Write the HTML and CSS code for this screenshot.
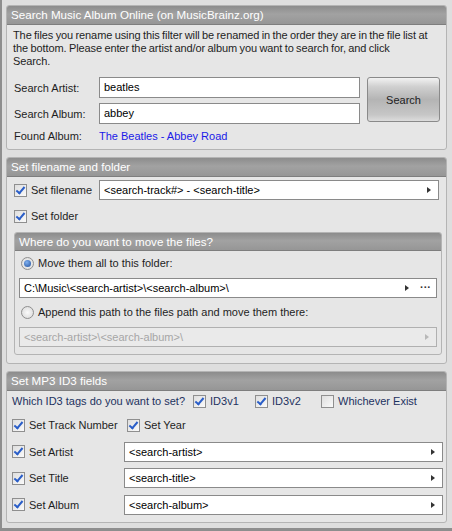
FILE: index.html
```html
<!DOCTYPE html>
<html lang="en">
<head>
  <meta charset="UTF-8" />
  <title>Rename Filter</title>
  <link rel="stylesheet" href="styles.css">
</head>
<body>
  <div class="window">

    <section class="panel">
      <div class="panel-head">Search Music Album Online (on MusicBrainz.org)</div>
      <div class="panel-body search-body">
        <p class="intro">The files you rename using this filter will be renamed in the order they are in the file list at<br>the bottom. Please enter the artist and/or album you want to search for, and click<br>Search.</p>
        <div class="search-grid">
          <div class="search-fields">
            <div class="row">
              <span class="label">Search Artist:</span>
              <div class="field">beatles</div>
            </div>
            <div class="row">
              <span class="label">Search Album:</span>
              <div class="field">abbey</div>
            </div>
          </div>
          <button class="search-btn">Search</button>
        </div>
        <div class="row found">
          <span class="label">Found Album:</span>
          <span class="link">The Beatles - Abbey Road</span>
        </div>
      </div>
    </section>

    <section class="panel">
      <div class="panel-head">Set filename and folder</div>
      <div class="panel-body folder-body">
        <div class="row">
          <label class="check wide"><span class="box checked"></span>Set filename</label>
          <div class="field arrow">&lt;search-track#&gt; - &lt;search-title&gt;</div>
        </div>
        <div class="row">
          <label class="check"><span class="box checked"></span>Set folder</label>
        </div>

        <section class="panel inner">
          <div class="panel-head">Where do you want to move the files?</div>
          <div class="panel-body move-body">
            <label class="radio"><span class="dot checked"></span>Move them all to this folder:</label>
            <div class="field arrow dots">C:\Music\&lt;search-artist&gt;\&lt;search-album&gt;\</div>
            <label class="radio"><span class="dot"></span>Append this path to the files path and move them there:</label>
            <div class="field arrow disabled">&lt;search-artist&gt;\&lt;search-album&gt;\</div>
          </div>
        </section>
      </div>
    </section>

    <section class="panel">
      <div class="panel-head">Set MP3 ID3 fields</div>
      <div class="panel-body id3-body">
        <div class="row tags">
          <span class="question">Which ID3 tags do you want to set?</span>
          <label class="check tag1"><span class="box checked"></span>ID3v1</label>
          <label class="check tag2"><span class="box checked"></span>ID3v2</label>
          <label class="check"><span class="box"></span>Whichever Exist</label>
        </div>
        <div class="row track-row">
          <label class="check track"><span class="box checked"></span>Set Track Number</label>
          <label class="check"><span class="box checked"></span>Set Year</label>
        </div>
        <div class="row">
          <label class="check id3-label"><span class="box checked"></span>Set Artist</label>
          <div class="field arrow">&lt;search-artist&gt;</div>
        </div>
        <div class="row">
          <label class="check id3-label"><span class="box checked"></span>Set Title</label>
          <div class="field arrow">&lt;search-title&gt;</div>
        </div>
        <div class="row">
          <label class="check id3-label"><span class="box checked"></span>Set Album</label>
          <div class="field arrow">&lt;search-album&gt;</div>
        </div>
      </div>
    </section>

  </div>
</body>
</html>
```

FILE: styles.css
```css
body {
  margin: 0;
  padding: 0;
  font-family: "Liberation Sans", Arial, sans-serif;
  font-size: 11px;
  color: #1e1e1e;
  background: #dedede;
}

.window {
  width: 452px;
  height: 531px;
  box-sizing: border-box;
  padding: 5px 5px 0 4px;
  border-left: 2px solid #8e8e8e;
  border-bottom: 3px solid #8e8e8e;
  display: flex;
  flex-direction: column;
  gap: 7px;
}

.panel {
  border: 1px solid #b4b4b4;
  border-radius: 3px;
  background: #e6e6e6;
  overflow: hidden;
}

.panel-head {
  height: 18px;
  line-height: 18px;
  padding-left: 4px;
  color: #fff;
  font-size: 11.6px;
  background: linear-gradient(#8c8c8c, #a2a2a2 45%, #969696);
  border-bottom: 1px solid #7e7e7e;
}

.panel-body {
  padding: 4px 6px 6px 6px;
}

.row {
  display: flex;
  align-items: center;
}

.label {
  width: 85px;
  flex: none;
  padding-left: 1px;
}

.field {
  flex: 1;
  height: 18px;
  line-height: 18px;
  padding: 0 4px;
  background: #fff;
  border: 1px solid #8a8a8a;
  color: #000;
  white-space: nowrap;
  overflow: hidden;
  position: relative;
}

.field.arrow::after {
  content: "";
  position: absolute;
  right: 7px;
  top: 6px;
  border-left: 4px solid #333;
  border-top: 3px solid transparent;
  border-bottom: 3px solid transparent;
}

.field.dots::after {
  right: 27px;
}

.field.dots::before {
  content: "\00b7\00b7\00b7";
  position: absolute;
  right: 5px;
  top: -1px;
  font-weight: bold;
  color: #333;
}

.field.disabled {
  background: #eaeaea;
  border-color: #b0b0b0;
  color: #a6a6a6;
}

.field.disabled::after {
  border-left-color: #b8b8b8;
}

/* search panel */
.search-body {
  padding: 4px 5px 7px 6px;
}

.intro {
  margin: 0 -4px 9px 0;
  line-height: 13px;
  letter-spacing: -0.1px;
  word-spacing: -0.5px;
  white-space: nowrap;
}

.search-grid {
  display: flex;
  gap: 7px;
}

.search-fields {
  flex: 1;
  display: flex;
  flex-direction: column;
  gap: 5px;
}

.search-fields .field {
  height: 19px;
}

.search-btn {
  width: 73px;
  height: 45px;
  margin-right: 1px;
  font-family: inherit;
  font-size: 11px;
  color: #222;
  border: 1px solid #8a8a8a;
  border-radius: 3px;
  background: linear-gradient(#f2f2f2, #d0d0d0 20%, #b4b4b4 50%, #c6c6c6 85%, #dcdcdc);
}

.found {
  margin-top: 6px;
}

.link {
  color: #1a1ae8;
}

/* checkboxes and radios */
.check,
.radio {
  display: flex;
  align-items: center;
  gap: 4px;
  white-space: nowrap;
}

.box {
  width: 11px;
  height: 11px;
  border: 1px solid #8f8f8f;
  background: linear-gradient(135deg, #dedede, #fafafa);
  position: relative;
  flex: none;
}

.box.checked::after {
  content: "";
  position: absolute;
  left: 3px;
  top: 0px;
  width: 3px;
  height: 7px;
  border: solid #2a5ec8;
  border-width: 0 2px 2px 0;
  transform: rotate(40deg);
}

.dot {
  width: 11px;
  height: 11px;
  border: 1px solid #8f8f8f;
  border-radius: 50%;
  background: radial-gradient(#fafafa, #d6d6d6);
  position: relative;
  flex: none;
}

.dot.checked::after {
  content: "";
  position: absolute;
  left: 2px;
  top: 2px;
  width: 7px;
  height: 7px;
  border-radius: 50%;
  background: radial-gradient(circle at 40% 35%, #7fb0f0, #1f4f9c);
}

/* filename panel */
.folder-body {
  padding: 3px 4px 8px 7px;
  display: flex;
  flex-direction: column;
  gap: 6px;
}

.folder-body > .row {
  height: 20px;
}

.check.wide {
  width: 85px;
  flex: none;
}

.folder-body > .row .field {
  margin-right: 3px;
}

.inner .panel-head {
  height: 17px;
  line-height: 17px;
}

.move-body {
  padding: 5px 4px 7px 4px;
  display: flex;
  flex-direction: column;
}

.move-body .radio {
  padding-left: 2px;
  height: 14px;
}

.move-body .field {
  margin: 8px 0 7px 0;
}

.move-body .field.disabled {
  margin-bottom: 0;
}

/* id3 panel */
.id3-body {
  padding: 0 3px 7px 5px;
  display: flex;
  flex-direction: column;
  gap: 6.5px;
}

.id3-body .row {
  height: 20px;
}

.id3-body .track-row {
  margin-top: -2.5px;
}

.tags {
  color: #1d3260;
}

.question {
  margin-right: 8px;
}

.tag1 {
  width: 62px;
}

.tag2 {
  width: 66px;
}

.track {
  width: 115px;
}

.id3-label {
  width: 112px;
  flex: none;
}
```
